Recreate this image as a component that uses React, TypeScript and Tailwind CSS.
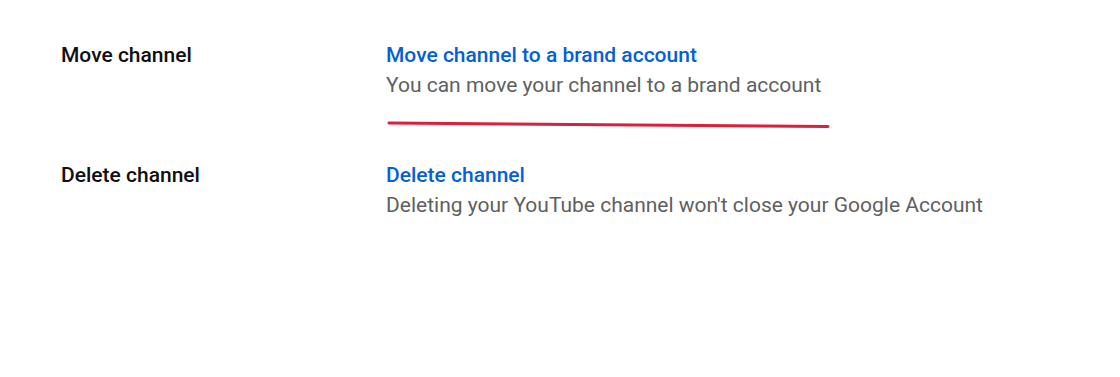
import React from 'react';

const rows = [
  {
    label: 'Move channel',
    link: 'Move channel to a brand account',
    desc: 'You can move your channel to a brand account',
    mark: true,
  },
  {
    label: 'Delete channel',
    link: 'Delete channel',
    desc: "Deleting your YouTube channel won't close your Google Account",
    mark: false,
  },
];

export default function App() {
  return (
    <div className="w-[1120px] h-[377px] bg-white font-['Roboto',sans-serif] pl-[61px] pt-[40px]">
      <div className="flex flex-col gap-[30px]">
        {rows.map((row, i) => (
          <div key={i} className="flex h-[90px]">
            <div className="w-[325px] text-[21px] leading-[30px] font-medium text-[#0f0f0f]">{row.label}</div>
            <div className="flex flex-col">
              <a className="text-[21px] leading-[30px] font-medium text-[#065fd4] cursor-pointer">{row.link}</a>
              <p className="text-[21px] leading-[30px] text-[#606060]">{row.desc}</p>
              {row.mark && (
                <svg width="450" height="14" viewBox="0 0 450 14" className="mt-[18px] shrink-0">
                  <path d="M3 5 L442 8.5" stroke="#dc1f3b" strokeWidth="3" strokeLinecap="round" fill="none" />
                </svg>
              )}
            </div>
          </div>
        ))}
      </div>
    </div>
  );
}
